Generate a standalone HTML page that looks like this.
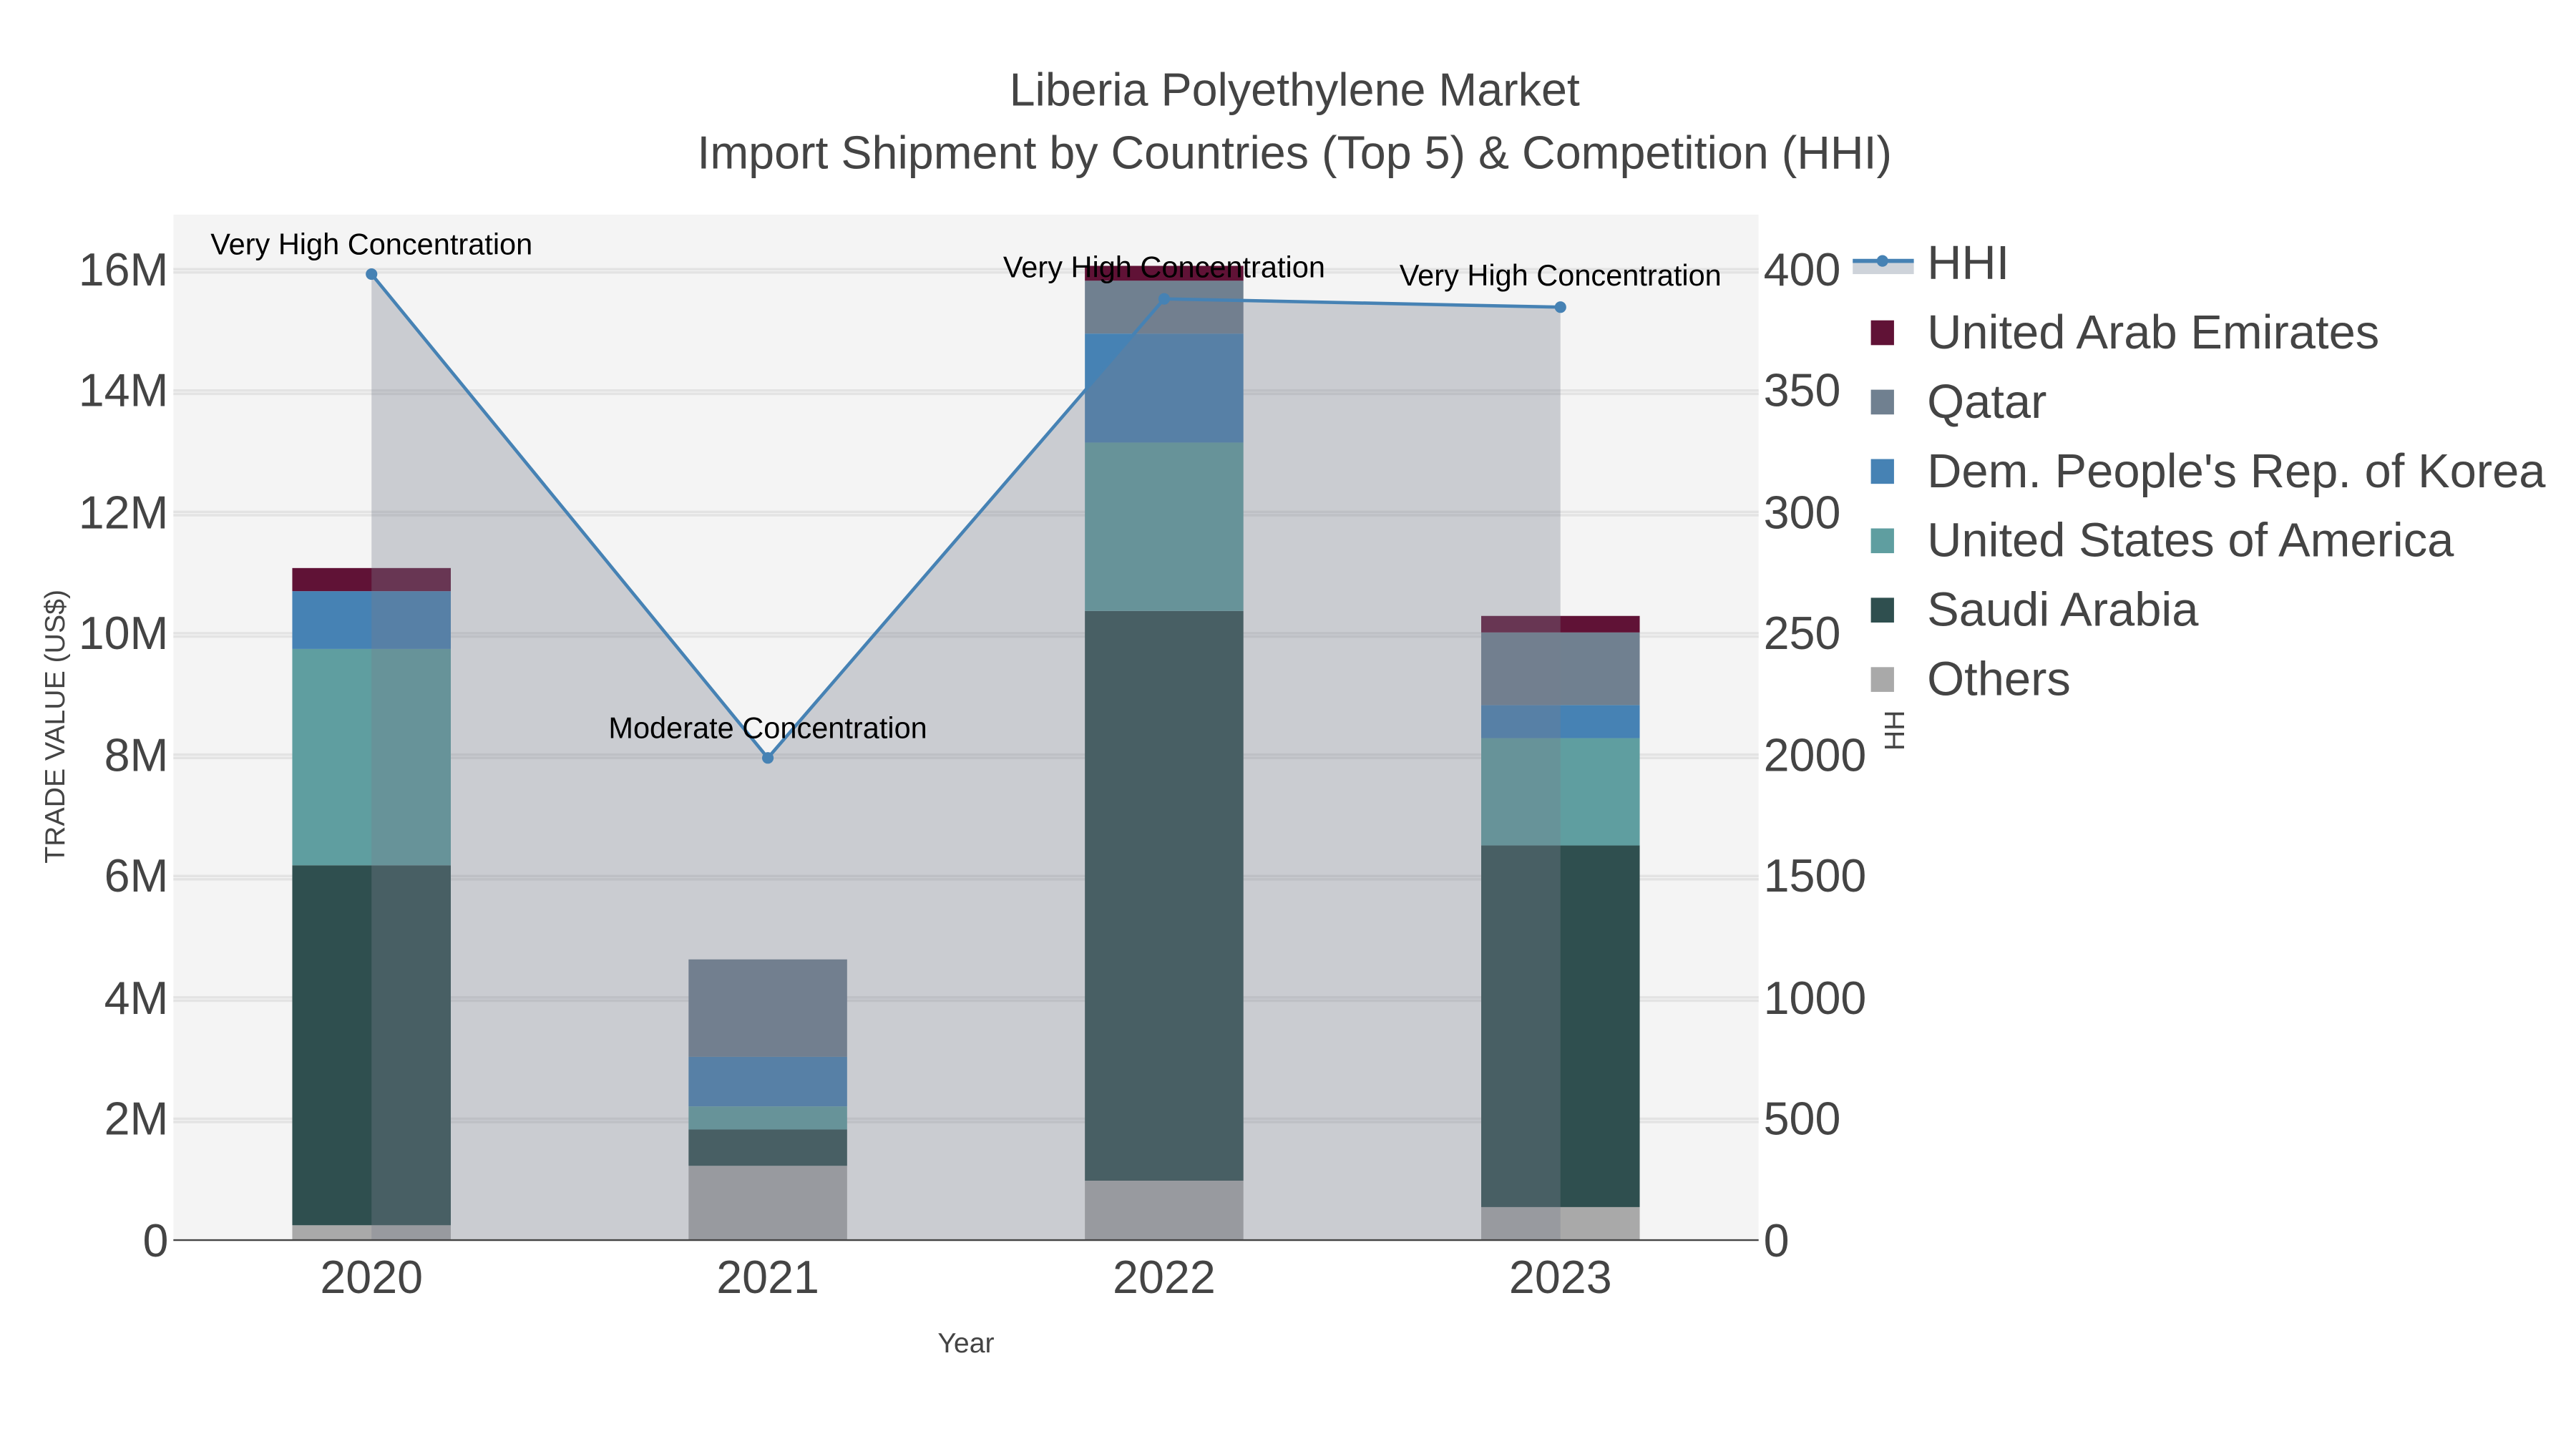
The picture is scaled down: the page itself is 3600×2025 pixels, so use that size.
<!DOCTYPE html>
<html><head><meta charset="utf-8"><style>html,body{margin:0;padding:0;background:#fff}svg{display:block}</style></head>
<body>
<svg width="3600" height="2025" viewBox="0 0 1560 877.5" xmlns="http://www.w3.org/2000/svg" font-family="Liberation Sans, sans-serif">
<rect width="1560" height="877.5" fill="#fff"/>
<rect x="105" y="130" width="960" height="621" fill="#f4f4f4"/>
<g stroke="#e3e3e3" stroke-width="1.5">
<line x1="105" x2="1065" y1="677.5" y2="677.5"/><line x1="105" x2="1065" y1="604" y2="604"/>
<line x1="105" x2="1065" y1="530.5" y2="530.5"/><line x1="105" x2="1065" y1="457" y2="457"/>
<line x1="105" x2="1065" y1="383.5" y2="383.5"/><line x1="105" x2="1065" y1="310" y2="310"/>
<line x1="105" x2="1065" y1="236.5" y2="236.5"/><line x1="105" x2="1065" y1="163" y2="163"/>
<line x1="105" x2="1065" y1="679.5" y2="679.5"/><line x1="105" x2="1065" y1="606" y2="606"/>
<line x1="105" x2="1065" y1="532.5" y2="532.5"/><line x1="105" x2="1065" y1="459" y2="459"/>
<line x1="105" x2="1065" y1="385.5" y2="385.5"/><line x1="105" x2="1065" y1="312" y2="312"/>
<line x1="105" x2="1065" y1="238.5" y2="238.5"/><line x1="105" x2="1065" y1="165" y2="165"/>
</g>
<g>
<rect x="177" y="742" width="96" height="9" fill="#a9a9a9"/>
<rect x="177" y="524" width="96" height="218" fill="#2f4f4f"/>
<rect x="177" y="393" width="96" height="131" fill="#5f9ea0"/>
<rect x="177" y="358" width="96" height="35" fill="#4682b4"/>
<rect x="177" y="344" width="96" height="14" fill="#601236"/>

<rect x="417" y="706" width="96" height="45" fill="#a9a9a9"/>
<rect x="417" y="684" width="96" height="22" fill="#2f4f4f"/>
<rect x="417" y="670" width="96" height="14" fill="#5f9ea0"/>
<rect x="417" y="640" width="96" height="30" fill="#4682b4"/>
<rect x="417" y="581" width="96" height="59" fill="#708090"/>

<rect x="657" y="715" width="96" height="36" fill="#a9a9a9"/>
<rect x="657" y="370" width="96" height="345" fill="#2f4f4f"/>
<rect x="657" y="268" width="96" height="102" fill="#5f9ea0"/>
<rect x="657" y="202" width="96" height="66" fill="#4682b4"/>
<rect x="657" y="170" width="96" height="32" fill="#708090"/>
<rect x="657" y="161" width="96" height="9" fill="#601236"/>

<rect x="897" y="731" width="96" height="20" fill="#a9a9a9"/>
<rect x="897" y="512" width="96" height="219" fill="#2f4f4f"/>
<rect x="897" y="447" width="96" height="65" fill="#5f9ea0"/>
<rect x="897" y="427" width="96" height="20" fill="#4682b4"/>
<rect x="897" y="383" width="96" height="44" fill="#708090"/>
<rect x="897" y="373" width="96" height="10" fill="#601236"/>
</g>
<polygon points="225,751 225,166 465,459 705,181 945,186 945,751" fill="rgb(119,126,141)" fill-opacity="0.34"/>
<polyline points="225,166 465,459 705,181 945,186" fill="none" stroke="#4682b4" stroke-width="2"/>
<g fill="#4682b4"><circle cx="225" cy="166" r="3.5"/><circle cx="465" cy="459" r="3.5"/><circle cx="705" cy="181" r="3.5"/><circle cx="945" cy="186" r="3.5"/></g>
<line x1="105" x2="1065" y1="751" y2="751" stroke="#444" stroke-width="1"/>
<g font-size="18" fill="#000" text-anchor="middle">
<text x="225" y="154">Very High Concentration</text>
<text x="465" y="447">Moderate Concentration</text>
<text x="705" y="168">Very High Concentration</text>
<text x="945" y="173">Very High Concentration</text>
</g>
<g font-size="28" fill="#444" text-anchor="end">
<text x="102" y="761">0</text><text x="102" y="687">2M</text><text x="102" y="614">4M</text>
<text x="102" y="540">6M</text><text x="102" y="467">8M</text><text x="102" y="393">10M</text>
<text x="102" y="320">12M</text><text x="102" y="246">14M</text><text x="102" y="173">16M</text>
</g>
<g font-size="28" fill="#444">
<text x="1068" y="761">0</text><text x="1068" y="687">500</text><text x="1068" y="614">1000</text>
<text x="1068" y="540">1500</text><text x="1068" y="467">2000</text><text x="1068" y="393">2500</text>
<text x="1068" y="320">3000</text><text x="1068" y="246">3500</text><text x="1068" y="173">4000</text>
</g>
<text transform="translate(1153,440) rotate(-90)" font-size="17" fill="#444" text-anchor="middle">HHI</text>
<rect x="1114" y="138" width="446" height="292" fill="#fff"/>
<g font-size="28" fill="#444" text-anchor="middle">
<text x="225" y="783">2020</text><text x="465" y="783">2021</text><text x="705" y="783">2022</text><text x="945" y="783">2023</text>
</g>
<text x="585" y="819" font-size="17" fill="#444" text-anchor="middle">Year</text>
<text transform="translate(39,440) rotate(-90)" font-size="17" fill="#444" text-anchor="middle">TRADE VALUE (US$)</text>
<g font-size="28" fill="#444" text-anchor="middle">
<text x="784" y="64">Liberia Polyethylene Market</text>
<text x="784" y="102">Import Shipment by Countries (Top 5) &amp; Competition (HHI)</text>
</g>
<rect x="1122" y="158" width="37" height="8" fill="#ced3da"/>
<line x1="1122" x2="1159" y1="158" y2="158" stroke="#4682b4" stroke-width="2.5"/>
<circle cx="1140" cy="158" r="3.5" fill="#4682b4"/>
<rect x="1133" y="194" width="14" height="15" fill="#601236"/>
<rect x="1133" y="236" width="14" height="15" fill="#708090"/>
<rect x="1133" y="278" width="14" height="15" fill="#4682b4"/>
<rect x="1133" y="320" width="14" height="15" fill="#5f9ea0"/>
<rect x="1133" y="362" width="14" height="15" fill="#2f4f4f"/>
<rect x="1133" y="404" width="14" height="15" fill="#a9a9a9"/>
<g font-size="29" fill="#444">
<text x="1167" y="169">HHI</text>
<text x="1167" y="211">United Arab Emirates</text>
<text x="1167" y="253">Qatar</text>
<text x="1167" y="295">Dem. People's Rep. of Korea</text>
<text x="1167" y="337">United States of America</text>
<text x="1167" y="379">Saudi Arabia</text>
<text x="1167" y="421">Others</text>
</g>
</svg>
</body></html>
